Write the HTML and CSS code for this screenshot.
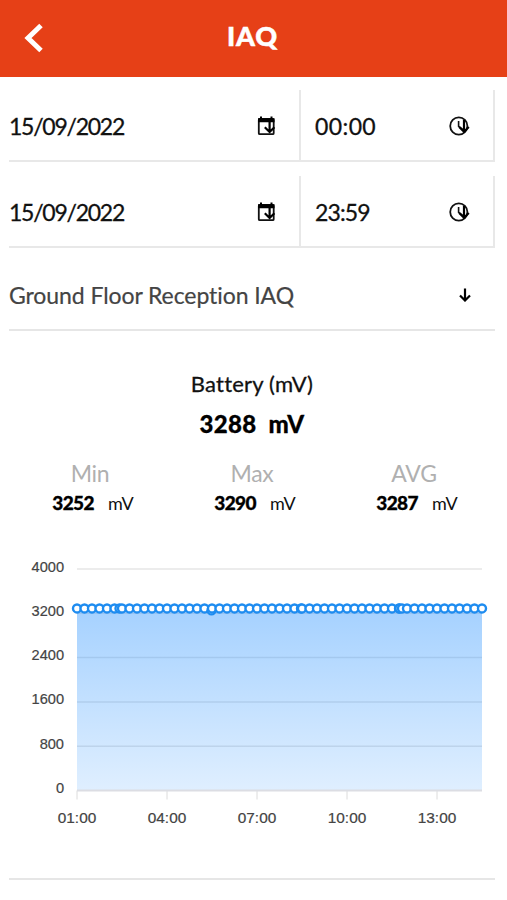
FILE: index.html
```
<!DOCTYPE html>
<html lang="en">
<head>
    <meta charset="UTF-8">
    <meta name="viewport" content="width=device-width, initial-scale=1.0">
    <title>IAQ</title>
    <link rel="stylesheet" href="styles.css">
</head>
<body>
    <svg class="symbols" width="0" height="0">
        <symbol id="arrow-down" viewBox="0 0 12 14">
            <path d="M6 0.5V13M1 7.5L6 12.5L11 7.5" fill="none" stroke="#000" stroke-width="2.2"/>
        </symbol>
        <symbol id="calendar" viewBox="0 0 24 24">
            <rect x="4.8" y="5" width="14.9" height="15.2" rx="1" fill="none" stroke="#111" stroke-width="1.8"/>
            <path d="M4 4.2H20.5V8.2H4ZM6 2.4H8V5H6ZM16.5 2.4H18.5V5H16.5Z"/>
            <path d="M15.6 7V18M10.8 13.2L15.6 18L20.4 13.2" fill="none" stroke="#000" stroke-width="2.2"/>
        </symbol>
        <symbol id="clock" viewBox="0 0 24 24">
            <circle cx="10.8" cy="12" r="8.6" fill="none" stroke="#111" stroke-width="1.8"/>
            <path d="M10.6 7V12.4L14.5 15.2" fill="none" stroke="#111" stroke-width="1.6"/>
            <path d="M16 6V17.6M11.2 13L16 17.8L20.8 13" fill="none" stroke="#000" stroke-width="2.2"/>
        </symbol>
    </svg>
    <header class="header">
        <svg class="back" viewBox="0 0 20 30"><path d="M17 2.5L4 15L17 27.5" fill="none" stroke="#fff" stroke-width="5"/></svg>
        <h1 class="title">IAQ</h1>
    </header>
    <main class="content">
        <div class="period">
            <div class="field date"><span>15/09/2022</span><svg class="field-icon"><use href="#calendar"/></svg></div>
            <div class="field time"><span>00:00</span><svg class="field-icon"><use href="#clock"/></svg></div>
        </div>
        <div class="period">
            <div class="field date"><span>15/09/2022</span><svg class="field-icon"><use href="#calendar"/></svg></div>
            <div class="field time"><span>23:59</span><svg class="field-icon"><use href="#clock"/></svg></div>
        </div>
        <div class="select">
            <span>Ground Floor Reception IAQ</span>
            <svg class="select-icon"><use href="#arrow-down"/></svg>
        </div>
        <section class="card">
            <h2 class="name">Battery (mV)</h2>
            <p class="current">3288&nbsp; mV</p>
            <div class="stats">
                <div class="stat"><span class="label">Min</span><div class="value"><b>3252</b><span>mV</span></div></div>
                <div class="stat"><span class="label">Max</span><div class="value"><b>3290</b><span>mV</span></div></div>
                <div class="stat"><span class="label">AVG</span><div class="value"><b>3287</b><span>mV</span></div></div>
            </div>
            <svg id="chart" class="chart" viewBox="0 0 486 290">
                <defs>
                    <linearGradient id="fill" x1="0" y1="0" x2="0" y2="1">
                        <stop offset="0" stop-color="#1e8cff" stop-opacity="0.4"/>
                        <stop offset="1" stop-color="#1e8cff" stop-opacity="0.14"/>
                    </linearGradient>
                </defs>
            </svg>
        </section>
    </main>
    <script>
        const chart = document.querySelector("#chart")
        const left = 68
        const right = 473
        const bottom = 250.5
        const height = 221.5

        function add(tag, attrs, text){
            const el = document.createElementNS("http://www.w3.org/2000/svg", tag)
            for(const key in attrs){
                el.setAttribute(key, attrs[key])
            }
            if(text !== undefined){
                el.textContent = text
            }
            chart.appendChild(el)
        }
        function y(value){
            return bottom - value / 4000 * height
        }

        // y axis
        for(let v = 0; v <= 4000; v += 800){
            if(v){
                add("line", {class: "grid", x1: left, x2: right, y1: y(v), y2: y(v)})
            }
            add("text", {class: "tick", x: 55, y: y(v) + 2.5, "text-anchor": "end"}, v)
        }
        // x axis
        const hours = ["01:00", "04:00", "07:00", "10:00", "13:00"]
        hours.forEach((hour, i)=>{
            const x = left + i * 90
            add("line", {class: "mark", x1: x, x2: x, y1: bottom, y2: bottom + 9})
            add("text", {class: "tick hour", x: x, y: 283, "text-anchor": "middle"}, hour)
        })

        // a reading every 15 minutes, plus the extra ones
        add("rect", {x: left, y: y(3288), width: right - left, height: bottom - y(3288), fill: "url(#fill)"})
        add("line", {class: "axis", x1: left, x2: right, y1: bottom, y2: bottom})
        const points = []
        for(let i = 0; i <= 54; i++){
            points.push([i * 7.5, 3288])
        }
        points.push([42.5, 3288], [134.5, 3252], [224, 3288], [322, 3288], [325, 3288])
        points.sort((a, b)=> a[0] - b[0])
        add("polyline", {class: "line", points: points.map(p => (left + p[0]) + "," + y(p[1])).join(" ")})
        points.forEach(p =>{
            add("circle", {class: "point", cx: left + p[0], cy: y(p[1]), r: 4})
        })
    </script>
</body>
</html>
```
FILE: styles.css
```
*{
    box-sizing: border-box;
}
body{
    margin: 0;
    background: #fff;
    color: #111;
    font-family: Lato, "Liberation Sans", sans-serif;
    font-variant-ligatures: none;
}
.symbols{
    display: block;
}
.header{
    display: grid;
    grid-template-columns: 60px 1fr 60px;
    align-items: center;
    height: 77px;
    padding-bottom: 2px;
    background: #e64017;
    color: #fff;
}
.back{
    width: 20px;
    height: 30px;
    margin-left: 24px;
}
.title{
    margin: 0 2px 3px 0;
    font-size: 27px;
    font-weight: 900;
    line-height: 30px;
    letter-spacing: 0.8px;
    text-align: center;
    -webkit-text-stroke: 0.5px #fff;
}
.content{
    padding: 0 12px 0 9px;
}
.period{
    display: flex;
    height: 72px;
    margin-top: 13px;
    font-size: 23px;
    -webkit-text-stroke: 0.3px #111;
}
.field{
    display: flex;
    align-items: center;
    justify-content: space-between;
    padding-top: 1px;
    border-right: 2px solid #e8e8e8;
    border-bottom: 2px solid #e8e8e8;
}
.date{
    width: 292px;
    padding-right: 21px;
    letter-spacing: -1.25px;
}
.time{
    flex: 1;
    padding-left: 14px;
    padding-right: 21px;
    letter-spacing: 0.4px;
}
.period + .period .time{
    letter-spacing: -0.9px;
}
.field-icon{
    width: 24px;
    height: 24px;
}
.period + .period{
    margin-top: 14px;
}
.select{
    display: flex;
    align-items: center;
    justify-content: space-between;
    height: 83px;
    padding: 12px 24px 0 0;
    border-bottom: 2px solid #e6e6e6;
    color: #444;
    font-size: 23px;
    letter-spacing: -0.08px;
    -webkit-text-stroke: 0.2px #444;
}
.select-icon{
    width: 12px;
    height: 14px;
}
.card{
    height: 549px;
    padding-top: 37px;
    border-bottom: 2px solid #e6e6e6;
    text-align: center;
}
.name{
    margin: 0;
    font-size: 22px;
    font-weight: 400;
    line-height: 32px;
    letter-spacing: 0.2px;
    -webkit-text-stroke: 0.3px #111;
}
.current{
    margin: 6px 0 0;
    color: #000;
    font-size: 24px;
    font-weight: 900;
    line-height: 36px;
    letter-spacing: 0.3px;
    -webkit-text-stroke: 0.3px #000;
}
.stats{
    display: grid;
    grid-template-columns: repeat(3, 1fr);
    margin-top: 15px;
}
.label{
    display: block;
    color: #b0b0b0;
    font-size: 23px;
    line-height: 32px;
    letter-spacing: -0.3px;
}
.value{
    display: flex;
    justify-content: center;
    gap: 14px;
    padding-left: 6px;
    font-size: 18px;
    line-height: 28px;
}
.value b{
    color: #000;
    font-size: 19px;
    font-weight: 900;
    letter-spacing: -0.6px;
    -webkit-text-stroke: 0.3px #000;
}
.chart{
    display: block;
    width: 486px;
    height: 290px;
    margin-top: 23px;
}
.tick{
    fill: #444;
    font: 14.6px "Liberation Sans", Arial, sans-serif;
    stroke: #444;
    stroke-width: 0.2;
}
.hour{
    font-size: 15.4px;
}
.grid{
    stroke: #e6e6e6;
    stroke-width: 1.5;
}
.axis{
    stroke: #dcdde3;
    stroke-width: 2;
}
.mark{
    stroke: #dcdcdc;
}
.line{
    fill: none;
    stroke: #1e8cf0;
    stroke-width: 3;
}
.point{
    fill: #fff;
    stroke: #1e8cf0;
    stroke-width: 2.4;
}
```
